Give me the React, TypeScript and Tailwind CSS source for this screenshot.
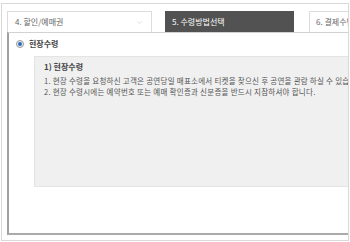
import { ChevronDown } from 'lucide-react';

const font = { fontFamily: '"Noto Sans CJK KR", "Noto Sans", sans-serif' };

export default function App() {
  return (
    <div className="h-[242px] w-[350px] bg-white pl-[1px] pt-[3px]" style={font}>
      {/* outer frame */}
      <div className="h-[238px] w-[348px] overflow-hidden border border-[#d9d9d9] pl-[5px] pt-[7px]">
        {/* step tabs */}
        <div className="flex h-[21px] w-[400px] items-stretch">
          <div className="flex w-[145px] items-center justify-between border border-b-0 border-[#dcdcdc] pl-[7px] pr-[8px] text-[8px] text-[#666]">
            <span>4. 할인/예매권</span>
            <ChevronDown className="h-[7px] w-[7px] text-[#c4c4c4]" strokeWidth={2} />
          </div>
          <div className="ml-[13px] flex w-[129px] items-center bg-[#525252] pl-[7px] text-[8px] text-white">
            5. 수령방법선택
          </div>
          <div className="ml-[15px] flex flex-1 items-center border border-b-0 border-[#dcdcdc] pl-[6px] text-[8px] text-[#666]">
            6. 결제수단
          </div>
        </div>

        {/* panel */}
        <div className="h-[203px] w-[400px] border-t border-b-2 border-l-2 border-t-[#d2d2d2] border-b-[#aaaaaa] border-l-[#a0a0a0] pl-[7px] pt-[5px]">
          <div className="flex h-[12px] items-center gap-[5px]">
            <span className="flex h-[8px] w-[8px] items-center justify-center rounded-full border border-[#9a9a9a] bg-[#e8eef4]">
              <span className="h-[4px] w-[4px] rounded-full bg-[#2c6cb4]" />
            </span>
            <span className="text-[8px] font-bold text-[#444]">현장수령</span>
          </div>

          <div className="ml-[18px] mt-[6px] h-[131px] border border-[#e4e4e4] bg-[#f0f0f0] pl-[9px] pt-[3px] text-[#555]">
            <div className="text-[8px] font-bold leading-[14px] text-[#444]">1) 현장수령</div>
            <div className="mt-[1px] whitespace-nowrap text-[7.5px] leading-[11px] tracking-[0.25px]">
              <p>1. 현장 수령을 요청하신 고객은 공연당일 매표소에서 티켓을 찾으신 후 공연을 관람 하실 수 있습니다.</p>
              <p>2. 현장 수령시에는 예약번호 또는 예매 확인증과 신분증을 반드시 지참하셔야 합니다.</p>
            </div>
          </div>
        </div>
      </div>
    </div>
  );
}
